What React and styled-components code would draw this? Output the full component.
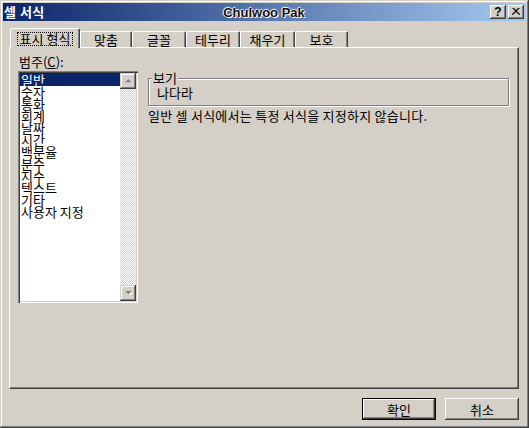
import React from "react";
import styled, { createGlobalStyle } from "styled-components";

const GlobalStyle = createGlobalStyle`
  html, body {
    margin: 0;
    padding: 0;
    background: #d4d0c8;
  }
  body {
    font-family: "Noto Sans CJK KR", "DejaVu Sans", sans-serif;
    font-size: 13px;
    color: #000;
  }
  * {
    box-sizing: border-box;
  }
`;

const Window = styled.div`
  width: 529px;
  height: 428px;
  padding: 3px;
  display: flex;
  flex-direction: column;
  background: #d4d0c8;
  box-shadow: inset -1px -1px #404040, inset 1px 1px #d4d0c8,
    inset -2px -2px #808080, inset 2px 2px #fff;
`;

const TitleBar = styled.div`
  height: 18px;
  display: grid;
  grid-template-columns: 1fr auto 1fr;
  align-items: center;
  padding: 0 2px 0 1px;
  background: linear-gradient(to right, #0a246a, #a6caf0);
`;

const TitleText = styled.span`
  color: #fff;
  font-weight: bold;
  font-size: 13px;
  line-height: 18px;
  letter-spacing: 0.5px;
  white-space: nowrap;
`;

const TitleCenter = styled.span`
  font-family: "Liberation Sans", Arial, sans-serif;
  font-weight: bold;
  font-size: 13px;
  color: #101010;
  text-shadow: 1px 1px 0 #fff, -1px 0 1px #fff, 0 -1px 1px #fff;
  white-space: nowrap;
`;

const CaptionButtons = styled.div`
  justify-self: end;
  display: flex;
  gap: 2px;
`;

const CaptionButton = styled.div`
  width: 16px;
  height: 14px;
  display: flex;
  align-items: center;
  justify-content: center;
  background: #d4d0c8;
  box-shadow: inset -1px -1px #404040, inset 1px 1px #fff,
    inset -2px -2px #808080;
  font-family: "Liberation Sans", Arial, sans-serif;
  font-weight: bold;
  font-size: 12px;
  line-height: 14px;
  padding-bottom: 1px;
`;

const Body = styled.div`
  flex: 1;
  display: flex;
  flex-direction: column;
  padding: 7px 7px 0 6px;
`;

const TabRow = styled.div`
  display: flex;
  align-items: flex-end;
  height: 19px;
  padding-left: 1px;
`;

const Tab = styled.div`
  position: relative;
  z-index: ${(p) => (p.$active ? 2 : 1)};
  width: ${(p) => p.$w}px;
  height: ${(p) => (p.$active ? 20 : 16)}px;
  margin-bottom: ${(p) => (p.$active ? -1 : 0)}px;
  display: flex;
  align-items: center;
  justify-content: center;
  padding-top: ${(p) => (p.$active ? 0 : 1)}px;
  background: #d4d0c8;
  border-top: 1px solid #fff;
  border-left: 1px solid #fff;
  border-right: 1px solid #404040;
  border-radius: 2px 2px 0 0;
  box-shadow: inset -1px 0 #808080;
  line-height: 14px;
  white-space: nowrap;
`;

const FocusLabel = styled.span`
  padding: 0 2px;
  border: 1px dotted #000;
  line-height: 12px;
`;

const Panel = styled.div`
  width: 510px;
  height: 342px;
  display: grid;
  grid-template-columns: 120px 361px;
  column-gap: 10px;
  align-content: start;
  padding: 7px 9px 0 8px;
  border-top: 1px solid #fff;
  border-left: 1px solid #fff;
  border-right: 1px solid #404040;
  border-bottom: 1px solid #404040;
  box-shadow: inset -1px -1px #808080;
`;

const Column = styled.div`
  display: flex;
  flex-direction: column;
  padding-top: ${(p) => p.$top || 0}px;
`;

const Label = styled.div`
  line-height: 14px;
  padding-left: 1px;
  margin-bottom: 2px;
`;

const Key = styled.span`
  text-decoration: underline;
`;

const ListBox = styled.div`
  width: 120px;
  height: 232px;
  display: flex;
  padding: 2px;
  background: #fff;
  box-shadow: inset 1px 1px #808080, inset 2px 2px #404040,
    inset -1px -1px #fff, inset -2px -2px #d4d0c8;
`;

const Items = styled.div`
  flex: 1;
  display: flex;
  flex-direction: column;
`;

const Item = styled.div`
  height: 12px;
  line-height: 12px;
  padding-left: 1px;
  white-space: nowrap;
  background: ${(p) => (p.$selected ? "#0a246a" : "transparent")};
  color: ${(p) => (p.$selected ? "#fff" : "#000")};
  &:first-child {
    height: 13px;
    line-height: 13px;
  }
`;

const ScrollBar = styled.div`
  width: 16px;
  display: flex;
  flex-direction: column;
`;

const ScrollTrack = styled.div`
  flex: 1;
  background: repeating-conic-gradient(#fff 0 25%, #d4d0c8 0 50%) 0 0 / 2px
    2px;
`;

const ScrollButton = styled.div`
  width: 16px;
  height: 16px;
  display: flex;
  align-items: center;
  justify-content: center;
  background: #d4d0c8;
  box-shadow: inset -1px -1px #404040, inset 1px 1px #d4d0c8,
    inset -2px -2px #808080, inset 2px 2px #fff;
`;

const Group = styled.fieldset`
  margin: 0;
  height: 35px;
  padding: 1px 8px 0 8px;
  border: 1px solid #808080;
  box-shadow: 1px 1px 0 #fff, inset 1px 1px 0 #fff;
`;

const Legend = styled.legend`
  margin-left: -5px;
  padding: 0 1px;
  line-height: 14px;
  background: #d4d0c8;
`;

const Sample = styled.div`
  line-height: 14px;
`;

const Description = styled.div`
  margin-top: 3px;
  line-height: 14px;
  letter-spacing: 0.25px;
  white-space: nowrap;
`;

const Footer = styled.div`
  display: flex;
  justify-content: flex-end;
  gap: 9px;
  margin-top: 9px;
`;

const Button = styled.button`
  width: 74px;
  height: 22px;
  padding: 0;
  font: inherit;
  font-size: 13px;
  color: #000;
  background: #d4d0c8;
  border: ${(p) => (p.$default ? "1px solid #000" : "none")};
  box-shadow: ${(p) =>
    p.$default
      ? "inset -1px -1px #404040, inset 1px 1px #fff, inset -2px -2px #808080"
      : "inset -1px -1px #404040, inset 1px 1px #fff, inset -2px -2px #808080, inset 2px 2px #d4d0c8"};
`;

const Arrow = ({ down }) => (
  <svg width="9" height="6" viewBox="0 0 9 6">
    {down ? (
      <>
        <polygon points="2,2 9,2 5.5,5.5" fill="#fff" />
        <polygon points="1,1 8,1 4.5,4.5" fill="#808080" />
      </>
    ) : (
      <>
        <polygon points="2,5 9,5 5.5,1.5" fill="#fff" />
        <polygon points="1,4.5 8,4.5 4.5,1" fill="#808080" />
      </>
    )}
  </svg>
);

const CloseGlyph = () => (
  <svg width="8" height="7" viewBox="0 0 8 7">
    <path
      d="M0.5 0 L7.5 7 M1.5 0 L8.5 7 M7.5 0 L0.5 7 M6.5 0 L-0.5 7"
      stroke="#000"
      strokeWidth="1"
    />
  </svg>
);

const tabs = [
  { label: "표시 형식", w: 70 },
  { label: "맞춤", w: 52 },
  { label: "글꼴", w: 54 },
  { label: "테두리", w: 54 },
  { label: "채우기", w: 55 },
  { label: "보호", w: 53 },
];

const categories = [
  "일반",
  "숫자",
  "통화",
  "회계",
  "날짜",
  "시간",
  "백분율",
  "분수",
  "지수",
  "텍스트",
  "기타",
  "사용자 지정",
];

export default function App() {
  return (
    <>
      <GlobalStyle />
      <Window>
        <TitleBar>
          <TitleText>셀 서식</TitleText>
          <TitleCenter>Chulwoo Pak</TitleCenter>
          <CaptionButtons>
            <CaptionButton>?</CaptionButton>
            <CaptionButton>
              <CloseGlyph />
            </CaptionButton>
          </CaptionButtons>
        </TitleBar>
        <Body>
          <TabRow>
            {tabs.map((t, i) => (
              <Tab key={t.label} $w={t.w} $active={i === 0}>
                {i === 0 ? <FocusLabel>{t.label}</FocusLabel> : t.label}
              </Tab>
            ))}
          </TabRow>
          <Panel>
            <Column>
              <Label>
                범주(<Key>C</Key>):
              </Label>
              <ListBox>
                <Items>
                  {categories.map((c, i) => (
                    <Item key={c} $selected={i === 0}>
                      {c}
                    </Item>
                  ))}
                </Items>
                <ScrollBar>
                  <ScrollButton>
                    <Arrow />
                  </ScrollButton>
                  <ScrollTrack />
                  <ScrollButton>
                    <Arrow down />
                  </ScrollButton>
                </ScrollBar>
              </ListBox>
            </Column>
            <Column $top={16}>
              <Group>
                <Legend>보기</Legend>
                <Sample>나다라</Sample>
              </Group>
              <Description>
                일반 셀 서식에서는 특정 서식을 지정하지 않습니다.
              </Description>
            </Column>
          </Panel>
          <Footer>
            <Button $default>확인</Button>
            <Button>취소</Button>
          </Footer>
        </Body>
      </Window>
    </>
  );
}
